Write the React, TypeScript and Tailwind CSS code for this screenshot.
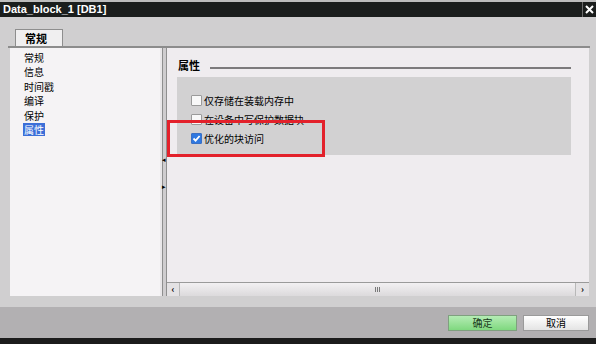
import React from "react";

const cjk = { fontFamily: '"Noto Sans CJK SC", "Noto Sans", sans-serif' };

function Box({ checked }: { checked?: boolean }) {
  return checked ? (
    <div className="w-[11px] h-[11px] border border-[#3a6fc4] bg-[#2f78e0] flex items-center justify-center rounded-[1px]">
      <svg width="9" height="9" viewBox="0 0 9 9">
        <path d="M1.5 4.5 L3.6 6.6 L7.6 2" stroke="white" strokeWidth="1.8" fill="none" />
      </svg>
    </div>
  ) : (
    <div className="w-[11px] h-[11px] border border-[#9a9a9a] bg-[#f8f8f8] rounded-[1px]" />
  );
}

export default function App() {
  const items = ["常规", "信息", "时间戳", "编译", "保护", "属性"];
  return (
    <div className="w-[596px] h-[344px] bg-[#d0cfd0] flex flex-col overflow-hidden" style={cjk}>
      {/* title bar */}
      <div className="h-[17px] bg-[#1b1e1d] border-t-2 border-[#bdbdbd] flex items-center justify-between">
        <span
          className="pl-[3px] text-white text-[11px] font-bold leading-none"
          style={{ fontFamily: '"Liberation Sans", sans-serif' }}
        >
          Data_block_1 [DB1]
        </span>
        <div className="h-full flex items-center border-l border-[#6a6a6a] pl-[2px] pr-[2px]">
          <svg width="9" height="9" viewBox="0 0 9 9">
            <path d="M1 1 L8 8 M8 1 L1 8" stroke="white" strokeWidth="2" />
          </svg>
        </div>
      </div>

      {/* tab strip */}
      <div className="h-[12px]" />
      <div className="flex pl-[15px]">
        <div className="w-[48px] h-[17px] bg-[#f0eff0] border border-b-0 border-[#8e8e8e] flex items-center pl-[9px] text-[11px] font-bold text-black leading-none">
          常规
        </div>
      </div>
      <div className="mx-[8px] mr-[6px] h-[2px] bg-[#8c8c8c]" />

      {/* content */}
      <div className="flex h-[248px] pl-[10px] pr-[7px]">
        {/* left list */}
        <div className="w-[150px] bg-[#f5f3f5] pt-[2px]">
          {items.map((t, i) => (
            <div key={t} className="h-[14.5px] flex items-center pl-[13px]">
              <span
                className={
                  "text-[10px] leading-[13px] px-[1px] " +
                  (i === 5 ? "bg-[#3c6fd8] text-white" : "text-black")
                }
              >
                {t}
              </span>
            </div>
          ))}
        </div>

        {/* splitter */}
        <div className="w-[7px] flex bg-[#dcdadc]">
          <div className="w-[2px] bg-[#e9e7e9]" />
          <div className="w-[1px] bg-[#8f8f8f]" />
          <div className="w-[3px] bg-[#cfcdcf] flex flex-col items-center">
            <div className="h-[108px]" />
            <span className="text-[7px] leading-none text-black -ml-[1px]">◂</span>
            <div className="h-[20px]" />
            <span className="text-[7px] leading-none text-black -ml-[1px]">▸</span>
          </div>
          <div className="w-[1px] bg-[#8f8f8f]" />
        </div>

        {/* right panel */}
        <div className="flex-1 relative bg-[#efecef] flex flex-col">
          <div className="flex-1 pt-[10px]">
            <div className="flex items-center pl-[11px] pr-[18px] h-[14px]">
              <span className="text-[11px] font-bold text-black leading-none">属性</span>
              <div className="flex-1 ml-[10px] mt-[6px] h-[2px] bg-[#7c7a7c]" />
            </div>
            <div className="mt-[5px] ml-[10px] mr-[18px] h-[78px] bg-[#d2d1d2] pt-[18px] pl-[14px] flex flex-col gap-[8px]">
              <div className="flex items-center gap-[2px] h-[11px]">
                <Box />
                <span className="text-[10px] leading-none text-black">仅存储在装载内存中</span>
              </div>
              <div className="flex items-center gap-[2px] h-[11px]">
                <Box />
                <span className="text-[10px] leading-none text-black">在设备中写保护数据块</span>
              </div>
              <div className="flex items-center gap-[2px] h-[11px]">
                <Box checked />
                <span className="text-[10px] leading-none text-black">优化的块访问</span>
              </div>
            </div>
          </div>

          {/* highlight */}
          <div className="absolute left-0 top-[72px] w-[158px] h-[37px] border-[3px] border-[#e3212b]" />

          {/* scrollbar */}
          <div className="h-[14px] flex border-t border-[#9a9a9a] bg-[#e4e2e4]">
            <div className="w-[13px] border-r border-[#b8b8b8] flex items-center justify-center text-[9px] font-bold text-black leading-none">
              ‹
            </div>
            <div className="flex-1 bg-gradient-to-b from-[#f2f0f2] to-[#dcdadc] flex items-center justify-center">
              <div className="flex gap-[1px]">
                <div className="w-[1px] h-[5px] bg-[#7a7a7a]" />
                <div className="w-[1px] h-[5px] bg-[#7a7a7a]" />
                <div className="w-[1px] h-[5px] bg-[#7a7a7a]" />
              </div>
            </div>
            <div className="w-[14px] border-l border-[#b8b8b8] flex items-center justify-center text-[9px] font-bold text-black leading-none">
              ›
            </div>
          </div>
        </div>
      </div>

      <div className="h-[11px] bg-[#d0cfd0]" />

      {/* bottom button bar */}
      <div className="h-[31px] bg-[#b2b0b2] flex justify-end items-start pt-[8px] pr-[7px] gap-[6px]">
        <div className="w-[69px] h-[16px] border border-[#7fa07f] bg-gradient-to-b from-[#b4ecb4] to-[#7fd87f] flex items-center justify-center text-[10px] leading-none text-[#1a3a1a]">
          确定
        </div>
        <div className="w-[66px] h-[16px] border border-[#9a9a9a] bg-gradient-to-b from-[#ffffff] to-[#e4e4e4] flex items-center justify-center text-[10px] leading-none text-black">
          取消
        </div>
      </div>
      <div className="flex-1 bg-[#1c1c1c]" />
    </div>
  );
}
